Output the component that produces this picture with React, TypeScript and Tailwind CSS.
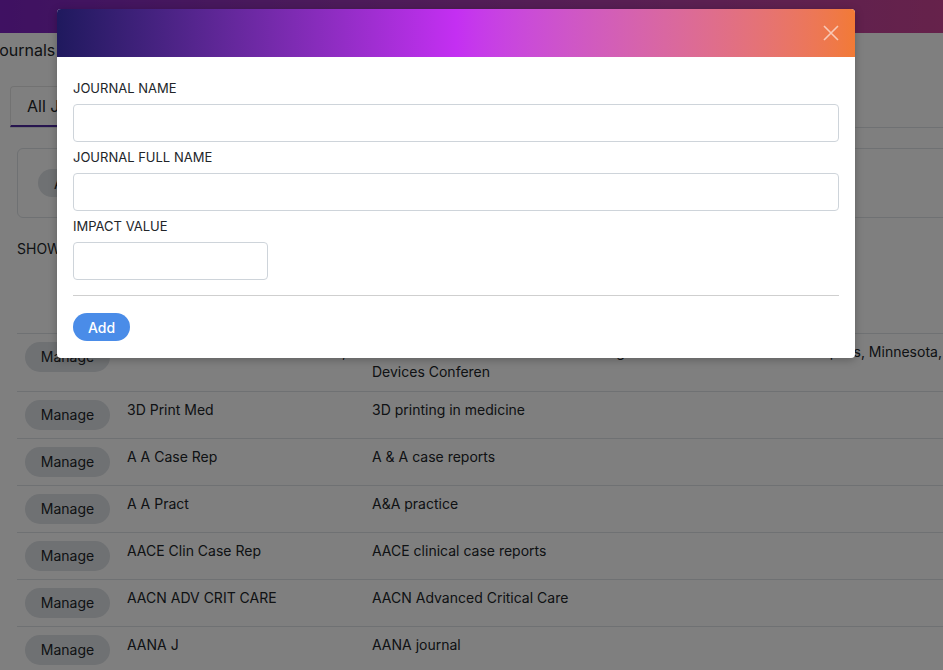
import React from "react";

const rows: { short: string; full: React.ReactNode; extra?: string }[] = [
  {
    short: "Front Biomed Devices Conf Proc,",
    full: (
      <>
        Frontiers in Biomedical Devices: Design of Medical
        <br />
        Devices Conferen
      </>
    ),
    extra: "Minneapolis, Minnesota,",
  },
  { short: "3D Print Med", full: "3D printing in medicine" },
  { short: "A A Case Rep", full: "A & A case reports" },
  { short: "A A Pract", full: "A&A practice" },
  { short: "AACE Clin Case Rep", full: "AACE clinical case reports" },
  { short: "AACN ADV CRIT CARE", full: "AACN Advanced Critical Care" },
  { short: "AANA J", full: "AANA journal" },
  { short: "AAPS J", full: "The AAPS journal" },
];

function Field({ label, narrow }: { label: string; narrow?: boolean }) {
  return (
    <div className="flex flex-col">
      <label className="mb-[6px] text-[13px] leading-[20px] text-[#212529]">{label}</label>
      <input
        type="text"
        className={`h-[38px] rounded-[4px] border border-[#ced4da] bg-white px-3 text-[14px] outline-none ${
          narrow ? "w-[195px]" : "w-full"
        }`}
      />
    </div>
  );
}

export default function App() {
  return (
    <div className="relative h-[670px] w-[943px] overflow-hidden bg-white font-['Inter',sans-serif] text-[#212529]">
      {/* page */}
      <div className="h-[33px] bg-gradient-to-r from-[#7e22c4] to-[#cc4496]" />
      <div className="flex h-[34px] items-center">
        <span className="-ml-[10px] text-[16px]">Journals</span>
      </div>
      <div className="ml-[10px] mt-[19px] flex border-b border-[#dee2e6]">
        <div className="flex h-[41px] w-[130px] items-center rounded-t-[4px] border-x border-t border-b-2 border-x-[#e5e5e5] border-t-[#e5e5e5] border-b-[#4f2a9e] pl-[16px] text-[16px]">
          All Journals
        </div>
      </div>
      <div className="ml-[17px] mt-[20px] w-[1000px] rounded-[6px] border border-[#dee2e6] px-[20px] py-[20px]">
        <button className="flex h-[28px] items-center rounded-full bg-[#dee2e6] px-[16px] text-[14px]">
          Add Journal
        </button>
      </div>
      <div className="ml-[17px] mt-[21px] text-[14px] leading-[20px]">SHOW 10 ENTRIES</div>

      <div className="ml-[17px] mt-[30px] w-[1000px] text-[14px]">
        <div className="flex h-[44px] items-center">
          <div className="w-[102px]" />
          <div className="w-[245px] px-[8px] font-semibold">Journal</div>
          <div className="w-[405px] px-[8px] font-semibold">Full Name</div>
          <div className="flex-1" />
        </div>
        {rows.map((r, i) => (
          <div
            key={i}
            className={`flex items-start border-t border-[#dee2e6] py-[8px] leading-[20px] ${i === 0 ? "pb-[9px]" : ""}`}
          >
            <div className="w-[102px] pl-[8px]">
              <button className="flex h-[30px] w-[85px] items-center justify-center rounded-full bg-[#dee2e6] text-[14px]">
                Manage
              </button>
            </div>
            <div className="w-[245px] px-[8px]">{r.short}</div>
            <div className="w-[405px] px-[8px]">{r.full}</div>
            <div className="flex-1 whitespace-nowrap pl-[12px] pr-[8px]">{r.extra ?? ""}</div>
          </div>
        ))}
      </div>

      {/* overlay */}
      <div className="absolute inset-0 bg-black/50" />

      {/* modal */}
      <div className="absolute left-[57px] top-[9px] w-[798px] overflow-hidden rounded-[4px] bg-white shadow-[0_2px_8px_rgba(0,0,0,0.25)]">
        <div className="flex h-[48px] items-center justify-end bg-gradient-to-r from-[#1f195e] via-[#c42ff2] to-[#f27a35] pr-[16px]">
          <svg width="16" height="16" viewBox="0 0 16 16" className="opacity-60">
            <path d="M1 1 L15 15 M15 1 L1 15" stroke="white" strokeWidth="1.6" fill="none" />
          </svg>
        </div>
        <div className="px-[16px] pb-[17px] pt-[21px]">
          <div className="flex flex-col gap-[5px]">
            <Field label="JOURNAL NAME" />
            <Field label="JOURNAL FULL NAME" />
            <Field label="IMPACT VALUE" narrow />
          </div>
          <div className="mt-[15px] border-t border-[#cfcfcf]" />
          <button className="mt-[17px] flex h-[28px] items-center rounded-full bg-[#4a8ce8] px-[15px] text-[14px] font-medium text-white">
            Add
          </button>
        </div>
      </div>
    </div>
  );
}
